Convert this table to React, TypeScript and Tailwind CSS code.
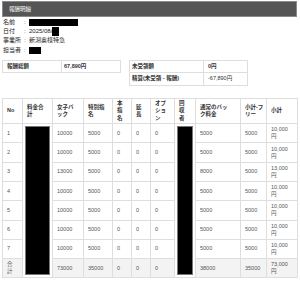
import React from "react";

const rows: string[][] = [
  ["1", "10000", "5000", "0", "0", "0", "5000", "5000", "10,000円"],
  ["2", "10000", "5000", "0", "0", "0", "5000", "5000", "10,000円"],
  ["3", "13000", "5000", "0", "0", "0", "8000", "5000", "13,000円"],
  ["4", "10000", "5000", "0", "0", "0", "5000", "5000", "10,000円"],
  ["5", "10000", "5000", "0", "0", "0", "5000", "5000", "10,000円"],
  ["6", "10000", "5000", "0", "0", "0", "5000", "5000", "10,000円"],
  ["7", "10000", "5000", "0", "0", "0", "5000", "5000", "10,000円"],
];
const total = ["合計", "73000", "35000", "0", "0", "0", "38000", "35000", "73,000円"];

const widths = [20, 30, 31, 29, 19, 19, 24, 21, 45, 26, 31];

function Th({ children }: { children: React.ReactNode }) {
  return (
    <th className="border border-[#dedede] px-[4px] py-0 text-left align-middle whitespace-nowrap font-bold text-[5.5px] leading-[7.3px] text-[#333]">
      {children}
    </th>
  );
}

function Td({ children }: { children: React.ReactNode }) {
  return (
    <td className="border border-[#dedede] px-[4px] py-[2px] text-left align-middle text-[5.5px] leading-[7px] text-[#555]">
      {children}
    </td>
  );
}

function Redact() {
  return (
    <td rowSpan={8} className="relative border border-[#dedede] p-0">
      <div className="absolute inset-[2px] bg-black border border-[#777]" />
    </td>
  );
}

export default function App() {
  const all = [...rows, total];
  return (
    <div className="w-[300px] h-[282px] overflow-hidden bg-white px-[2px] text-[#333] font-['Liberation_Sans','Noto_Sans_CJK_JP',sans-serif]">
      <div className="mt-[1px] h-[16px] w-[295px] bg-[#555] border border-[#8a8a8a] flex items-center pl-[6px] text-white text-[5.5px]">
        報酬明細
      </div>

      <div className="mt-[0.5px] pl-[1px] text-[6px] leading-[9.4px] text-[#222]">
        <div className="flex items-center h-[9.4px]">
          <span className="w-[21px]">名前</span>
          <span className="w-[4px]">:</span>
          <span className="inline-block ml-[1px] w-[49px] h-[7px] bg-black" />
        </div>
        <div className="flex items-center h-[9.4px]">
          <span className="w-[21px]">日付</span>
          <span className="w-[5px]">:</span>
          <span>2025/08/</span>
          <span className="inline-block w-[7px] h-[8.5px] bg-black" />
        </div>
        <div className="flex items-center h-[9.4px]">
          <span className="w-[21px]">事業所</span>
          <span className="w-[5px]">:</span>
          <span>新潟奥様特急</span>
        </div>
        <div className="flex items-center h-[9.4px]">
          <span className="w-[21px]">担当者</span>
          <span className="w-[5px]">:</span>
          <span className="inline-block w-[12px] h-[6.5px] bg-black" />
        </div>
      </div>

      <div className="mt-[4.5px] flex items-start gap-[8px] text-[5.5px] text-[#333]">
        <table className="w-[118px] table-fixed border-collapse">
          <colgroup>
            <col className="w-[59px]" />
            <col className="w-[59px]" />
          </colgroup>
          <tbody>
            <tr className="h-[12px]">
              <td className="border border-[#dedede] px-[4px] py-0 font-bold">報酬総額</td>
              <td className="border border-[#dedede] px-[2px] py-0 font-bold">67,890円</td>
            </tr>
          </tbody>
        </table>
        <table className="w-[118px] table-fixed border-collapse">
          <colgroup>
            <col className="w-[74px]" />
            <col className="w-[44px]" />
          </colgroup>
          <tbody>
            <tr className="h-[12px]">
              <td className="border border-[#dedede] px-[2px] py-0 font-bold">未受領額</td>
              <td className="border border-[#dedede] px-[4px] py-0 font-bold">0円</td>
            </tr>
            <tr className="h-[13px]">
              <td className="border border-[#dedede] px-[2px] py-0 font-bold">精算(未受領 - 報酬)</td>
              <td className="border border-[#dedede] px-[4px] py-0">-67,890円</td>
            </tr>
          </tbody>
        </table>
      </div>

      <table className="mt-[12.5px] w-[295px] table-fixed border-collapse">
        <colgroup>
          {widths.map((w, i) => (
            <col key={i} style={{ width: w }} />
          ))}
        </colgroup>
        <thead>
          <tr className="h-[25px]">
            <Th>No</Th>
            <Th>料金合<br />計</Th>
            <Th>女子バ<br />ック</Th>
            <Th>特別指<br />名</Th>
            <Th>本<br />指<br />名</Th>
            <Th>延<br />長</Th>
            <Th>オプ<br />ショ<br />ン</Th>
            <Th>回<br />収<br />者</Th>
            <Th>通常のバッ<br />ク料金</Th>
            <Th>小計-フ<br />リー</Th>
            <Th>小計</Th>
          </tr>
        </thead>
        <tbody>
          {all.map((r, i) => {
            const last = i === all.length - 1;
            const amount = r[8].replace("円", "");
            return (
              <tr key={i} className={last ? "h-[19px] bg-[#f3f3f3]" : "h-[19.3px]"}>
                <Td>{last ? <>合<br />計</> : r[0]}</Td>
                {i === 0 && <Redact />}
                <Td>{r[1]}</Td>
                <Td>{r[2]}</Td>
                <Td>{r[3]}</Td>
                <Td>{r[4]}</Td>
                <Td>{r[5]}</Td>
                {i === 0 && <Redact />}
                <Td>{r[6]}</Td>
                <Td>{r[7]}</Td>
                <Td>{amount}<br />円</Td>
              </tr>
            );
          })}
        </tbody>
      </table>

      <div className="mt-[3.5px] flex gap-[5px]">
        <div className="w-[33px] h-[12px] border border-[#dedede] rounded-[1px]" />
        <div className="w-[33px] h-[12px] border border-[#dedede] rounded-[1px]" />
      </div>
    </div>
  );
}
